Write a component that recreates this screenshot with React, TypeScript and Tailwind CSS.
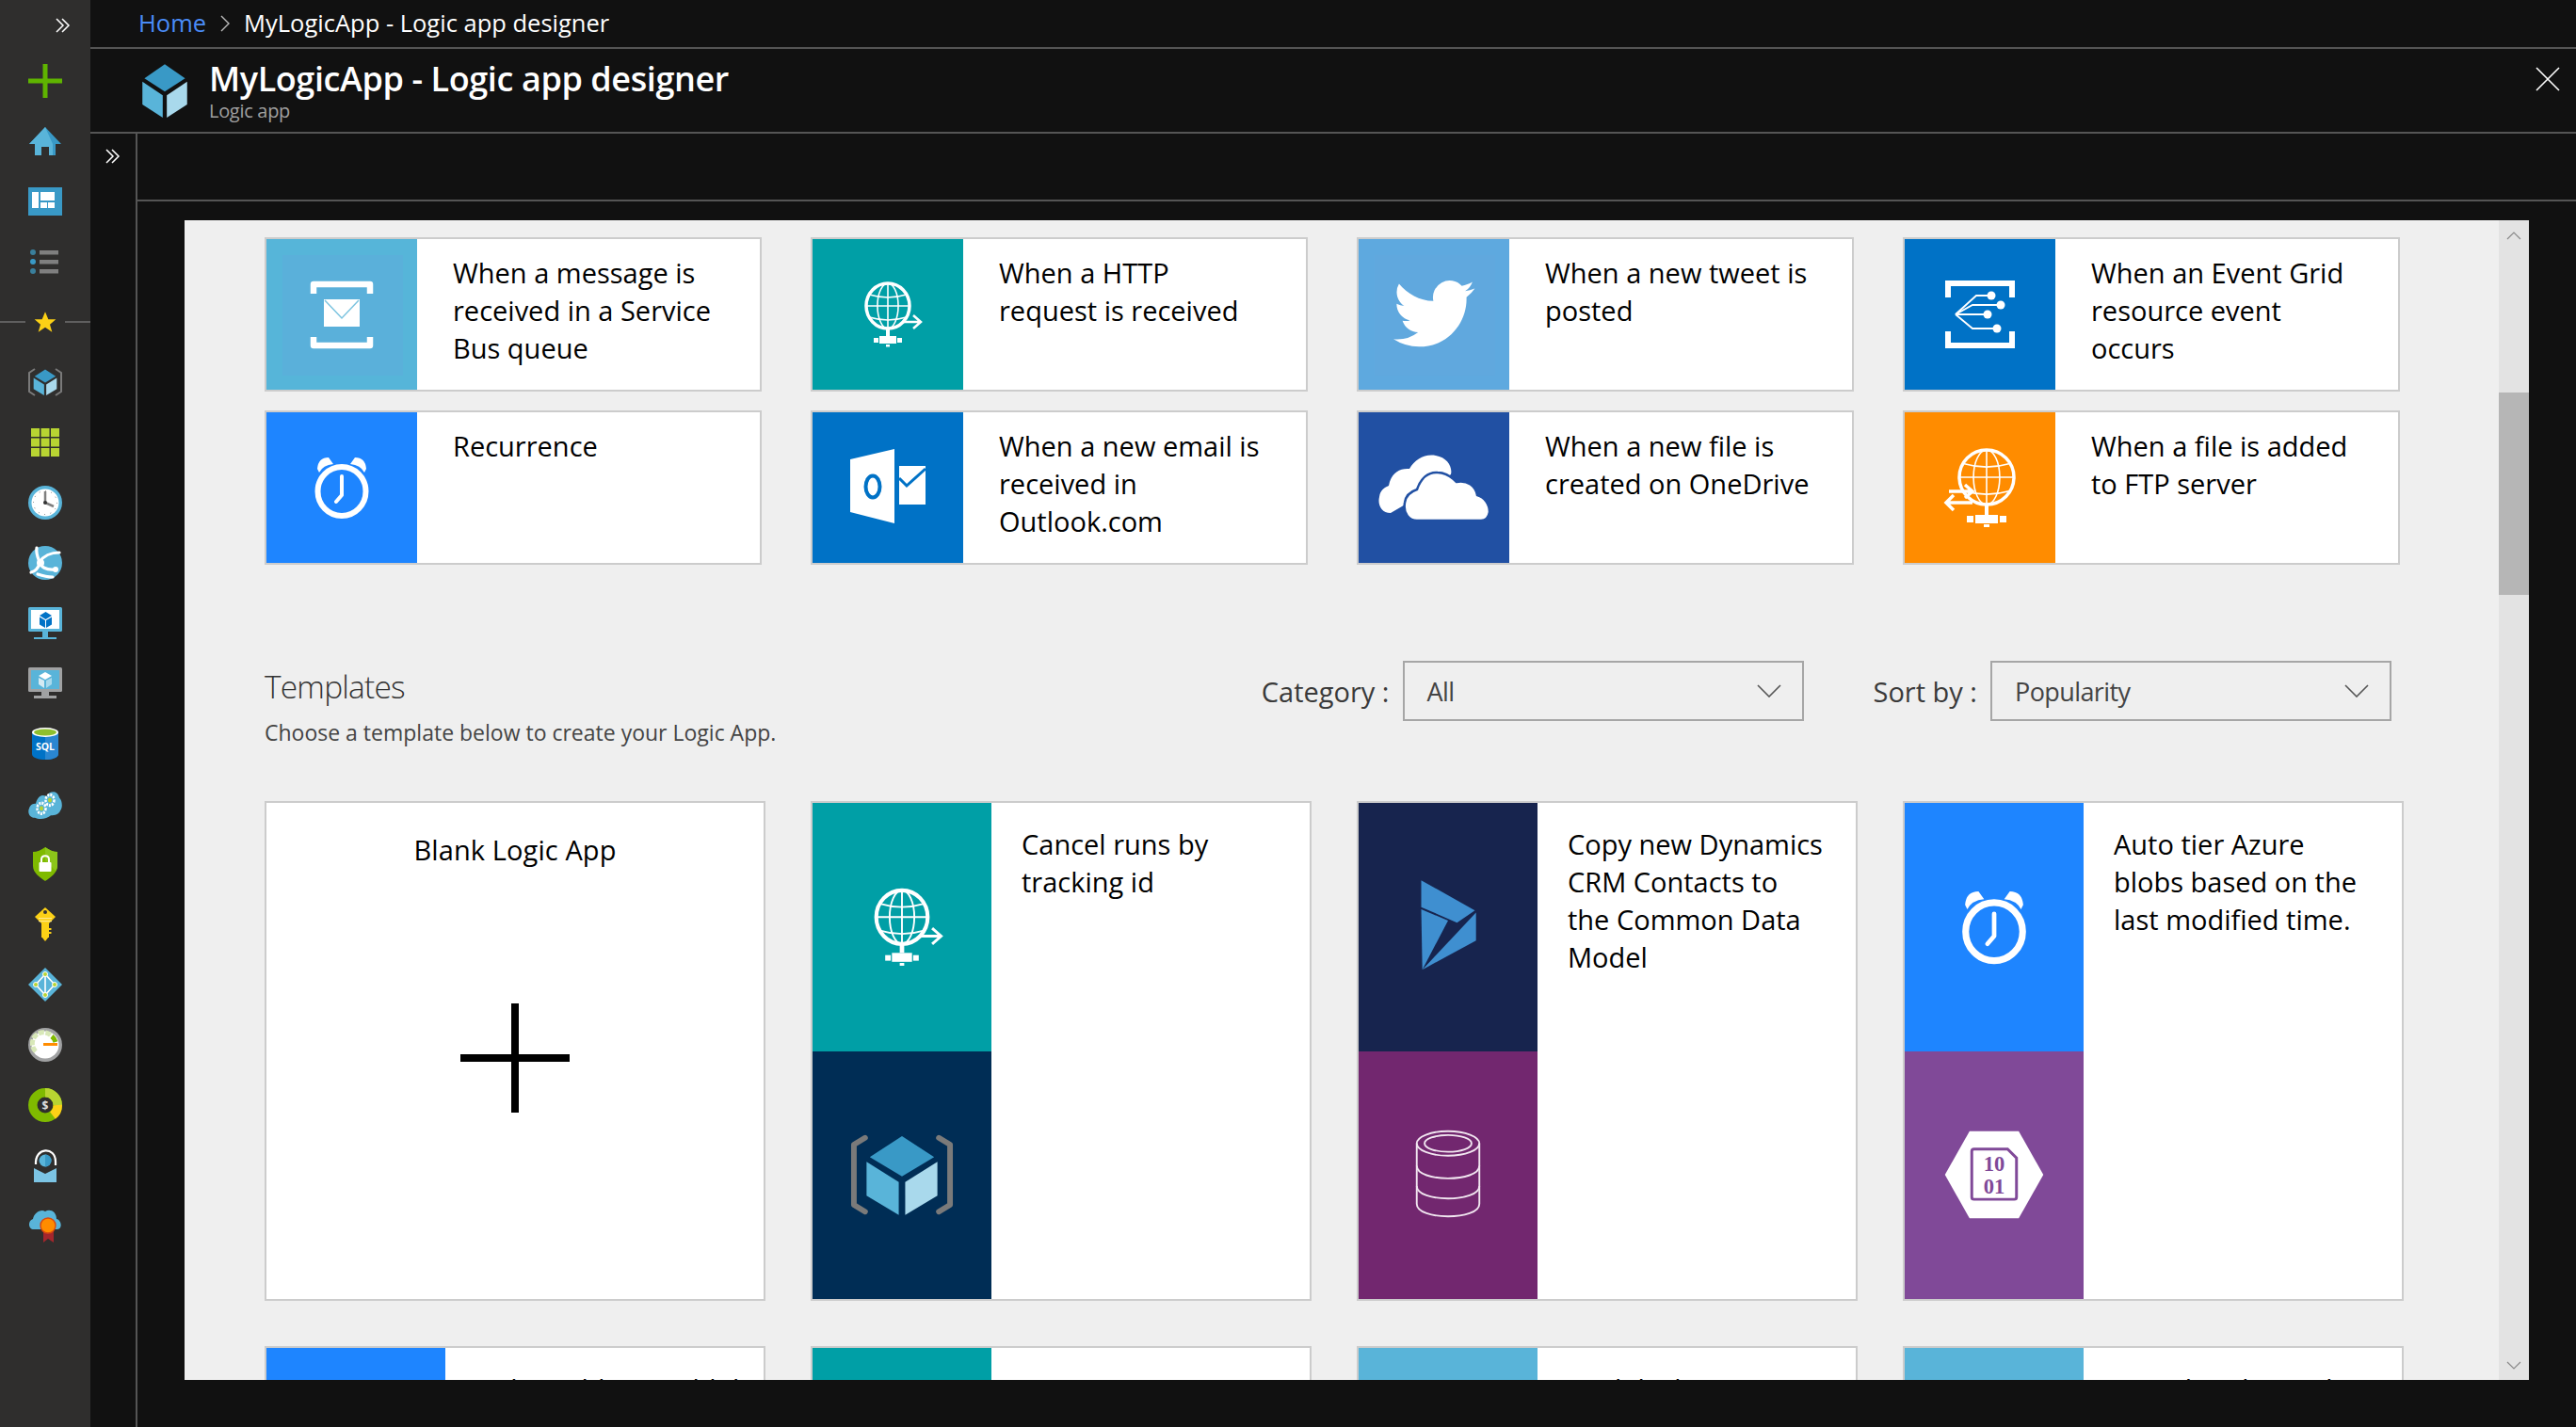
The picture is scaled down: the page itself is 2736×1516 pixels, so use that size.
import React from "react";

const font = { fontFamily: '"Open Sans", "Noto Sans", sans-serif' };

/* ---------- tile icons, drawn in a 160 box ---------- */
function Cube({ x, y, s }: { x: number; y: number; s: number }) {
  return (
    <g transform={`translate(${x} ${y}) scale(${s})`}>
      <polygon points="50,2 90,28 50,52 10,28" fill="#3999c6" />
      <polygon points="6,34 46,59 46,100 6,76" fill="#59b4d9" />
      <polygon points="94,34 54,59 54,100 94,76" fill="#a9d9ec" />
    </g>
  );
}

function GlobeGlyph({ cx, cy, rx, ry }: { cx: number; cy: number; rx: number; ry: number }) {
  return (
    <g fill="none" stroke="#fff">
      <ellipse cx={cx} cy={cy} rx={rx} ry={ry} strokeWidth="3.5" />
      <ellipse cx={cx} cy={cy} rx={rx * 0.48} ry={ry} strokeWidth="1.6" />
      <line x1={cx} y1={cy - ry} x2={cx} y2={cy + ry} strokeWidth="1.6" />
      <path d={`M${cx - rx} ${cy} H${cx + rx}`} strokeWidth="1.6" />
      <path d={`M${cx - rx * 0.85} ${cy - ry * 0.5} Q${cx} ${cy - ry * 0.25} ${cx + rx * 0.85} ${cy - ry * 0.5}`} strokeWidth="1.6" />
      <path d={`M${cx - rx * 0.85} ${cy + ry * 0.5} Q${cx} ${cy + ry * 0.75} ${cx + rx * 0.85} ${cy + ry * 0.5}`} strokeWidth="1.6" />
    </g>
  );
}

const ServiceBusIcon = () => (
  <svg viewBox="0 0 160 160" className="w-full">
    <rect x="17" y="17" width="128" height="128" fill="#5ab0da" />
    <path d="M50 58 V48 H110 V58" fill="none" stroke="#fff" strokeWidth="6.5" strokeLinejoin="round" />
    <path d="M50 104 V113 H110 V104" fill="none" stroke="#fff" strokeWidth="6.5" strokeLinejoin="round" />
    <rect x="61" y="64" width="38" height="29" fill="#fff" />
    <path d="M62 65 L80 84 L98 65" fill="none" stroke="#7cc4e0" strokeWidth="1.5" />
  </svg>
);

const HttpIcon = () => (
  <svg viewBox="0 0 160 160" className="w-full">
    <GlobeGlyph cx={80} cy={71} rx={23} ry={24} />
    <path d="M80 95 V103" stroke="#fff" strokeWidth="4" />
    <rect x="71" y="103" width="18" height="8" fill="#fff" />
    <rect x="65" y="105" width="5" height="5" fill="#fff" />
    <rect x="90" y="105" width="5" height="5" fill="#fff" />
    <rect x="78" y="112" width="4" height="2.5" fill="#fff" />
    <path d="M95 88 H115 M107 81 L115 88 L107 95" fill="none" stroke="#fff" strokeWidth="2.5" />
  </svg>
);

const TwitterIcon = () => (
  <svg viewBox="0 0 160 160" className="w-full">
    <rect x="17" y="17" width="128" height="128" fill="#60a8de" />
    <g transform="translate(37 36) scale(3.6)">
      <path
        fill="#fff"
        d="M23.953 4.57a10 10 0 01-2.825.775 4.958 4.958 0 002.163-2.723c-.951.555-2.005.959-3.127 1.184a4.92 4.92 0 00-8.384 4.482C7.69 8.095 4.067 6.13 1.64 3.162a4.822 4.822 0 00-.666 2.475c0 1.71.87 3.213 2.188 4.096a4.904 4.904 0 01-2.228-.616v.06a4.923 4.923 0 003.946 4.827 4.996 4.996 0 01-2.212.085 4.936 4.936 0 004.604 3.417 9.867 9.867 0 01-6.102 2.105c-.39 0-.779-.023-1.17-.067a13.995 13.995 0 007.557 2.209c9.053 0 13.998-7.496 13.998-13.985 0-.21 0-.42-.015-.63A9.935 9.935 0 0024 4.59z"
      />
    </g>
  </svg>
);

const EventGridIcon = () => (
  <svg viewBox="0 0 160 160" className="w-full">
    <path d="M46 62 V47 H114 V62" fill="none" stroke="#fff" strokeWidth="6" />
    <path d="M46 98 V113 H114 V98" fill="none" stroke="#fff" strokeWidth="6" />
    <g fill="none" stroke="#fff" strokeWidth="1.8">
      <path d="M54 80 L76 60 H92" />
      <path d="M54 80 L72 70 H102" />
      <path d="M54 80 H88" />
      <path d="M54 80 L72 95 H98" />
    </g>
    <g fill="#fff">
      <circle cx="92" cy="60" r="4.5" />
      <circle cx="102" cy="70" r="4.5" />
      <circle cx="88" cy="80" r="4.5" />
      <circle cx="98" cy="95" r="4.5" />
    </g>
  </svg>
);

const AlarmIcon = () => (
  <svg viewBox="0 0 160 160" className="w-full">
    <ellipse cx="80" cy="84" rx="25.5" ry="26" fill="none" stroke="#fff" strokeWidth="6" />
    <path d="M54 60 Q55 48 66 48 L71 55 Q60 56 56 64 Z" fill="#fff" />
    <path d="M106 60 Q105 48 94 48 L89 55 Q100 56 104 64 Z" fill="#fff" />
    <path d="M80 68 V88 L74 95" fill="none" stroke="#fff" strokeWidth="4" strokeLinecap="round" strokeLinejoin="round" />
  </svg>
);

const OutlookIcon = () => (
  <svg viewBox="0 0 160 160" className="w-full">
    <polygon points="40,50 87,39 87,118 40,106" fill="#fff" />
    <ellipse cx="64" cy="79" rx="7.5" ry="11.5" fill="none" stroke="#0072c6" strokeWidth="4" />
    <path d="M92 57 H120 V98 H92 Z" fill="#fff" />
    <path d="M92 70 L100 78 L120 60" fill="none" stroke="#0072c6" strokeWidth="3" />
  </svg>
);

const OneDriveIcon = () => (
  <svg viewBox="0 0 160 160" className="w-full">
    <path d="M34 107 C24 107 20 98 22 90 C23 82 28 80 32 78 C34 66 42 59 54 60 C60 50 70 44 82 46 C94 48 100 58 98 66 L46 100 Z" fill="#fff" />
    <path d="M62 115 C54 115 47 108 49 96 C50 88 56 84 62 82 C66 70 74 63 84 64 C92 64 98 68 104 74 C116 72 124 78 126 88 C134 90 139 98 139 106 C138 112 134 115 130 115 Z" fill="#fff" stroke="#2150a3" strokeWidth="2.5" />
  </svg>
);

const FtpIcon = () => (
  <svg viewBox="0 0 160 160" className="w-full">
    <GlobeGlyph cx={87} cy={69} rx={29} ry={29} />
    <path d="M87 98 V109" stroke="#fff" strokeWidth="4" />
    <rect x="75" y="109" width="24" height="9" fill="#fff" />
    <rect x="66" y="110" width="7" height="7" fill="#fff" />
    <rect x="101" y="110" width="7" height="7" fill="#fff" />
    <rect x="84" y="119" width="6" height="3" fill="#fff" />
    <path d="M47 84 H72 M64 77 L72 84 L64 91" fill="none" stroke="#fff" strokeWidth="3.5" />
    <path d="M72 96 H44 M52 88 L44 96 L52 104" fill="none" stroke="#fff" strokeWidth="3.5" />
  </svg>
);

const LogicAppIcon = () => (
  <svg viewBox="0 0 160 160" className="w-full">
    <path d="M47 47 L37 53 V107 L47 113" fill="none" stroke="#7a7a7a" strokeWidth="5" strokeLinecap="round" strokeLinejoin="round" />
    <path d="M113 47 L123 53 V107 L113 113" fill="none" stroke="#7a7a7a" strokeWidth="5" strokeLinecap="round" strokeLinejoin="round" />
    <Cube x={44} y={44} s={0.72} />
  </svg>
);

const DynamicsIcon = () => (
  <svg viewBox="0 0 160 160" className="w-full">
    <polygon points="56,38 104,65 88,76 56,62" fill="#3f8fd0" />
    <polygon points="56,64 80,74 57,118" fill="#3f8fd0" />
    <polygon points="105,67 105,92 57,118" fill="#3f8fd0" />
  </svg>
);

const DbIcon = () => (
  <svg viewBox="0 0 160 160" className="w-full">
    <g fill="none" stroke="#f1e6f0" strokeWidth="1.6">
      <ellipse cx="80" cy="52" rx="28" ry="11" />
      <ellipse cx="80" cy="52" rx="21" ry="7.5" />
      <path d="M52 52 V106 C52 121 108 121 108 106 V52" />
      <path d="M52 72 C52 87 108 87 108 72" />
      <path d="M52 90 C52 105 108 105 108 90" />
    </g>
  </svg>
);

const BlobIcon = () => (
  <svg viewBox="0 0 160 160" className="w-full">
    <polygon points="36,80 58,41 102,41 124,80 102,119 58,119" fill="#fff" />
    <path d="M60 59 Q60 57 62 57 H92 L100 65 V100 Q100 102 98 102 H62 Q60 102 60 100 Z" fill="none" stroke="#804998" strokeWidth="2.5" />
    <text x="80" y="77" textAnchor="middle" fontSize="19" fontWeight="700" fill="#804998" fontFamily="Liberation Serif, serif">10</text>
    <text x="80" y="97" textAnchor="middle" fontSize="19" fontWeight="700" fill="#804998" fontFamily="Liberation Serif, serif">01</text>
  </svg>
);

/* ---------- sidebar icons, drawn in a 36 box ---------- */
const sideIcons: React.ReactNode[] = [
  // create
  <g key="p" fill="#5fb400">
    <rect x="15.5" y="0" width="5" height="36" />
    <rect x="0" y="15.5" width="36" height="5" />
  </g>,
  // home
  <g key="h">
    <path d="M18 3 L35 21 H29 V33 H22 V24 H14 V33 H7 V21 H1 Z" fill="#3999c6" />
    <path d="M18 3 L26 21 V33 H22 V24 H14 V33 H7 V21 H1 Z" fill="#59b4d9" />
  </g>,
  // dashboard
  <g key="d">
    <rect x="0" y="3" width="36" height="30" fill="#3999c6" />
    <rect x="4" y="8" width="7" height="17" fill="#fff" />
    <rect x="13" y="8" width="15" height="9" fill="#fff" />
    <rect x="13" y="19" width="7" height="6" fill="#fff" />
    <rect x="21" y="19" width="7" height="6" fill="#fff" />
  </g>,
  // list
  <g key="l">
    <circle cx="5" cy="8" r="3" fill="#3a7f9c" />
    <circle cx="5" cy="18" r="3" fill="#3999c6" />
    <circle cx="5" cy="28" r="3" fill="#3a7f9c" />
    <rect x="12" y="6" width="20" height="4.5" fill="#7f7f7f" />
    <rect x="12" y="16" width="20" height="4.5" fill="#7f7f7f" />
    <rect x="12" y="26" width="20" height="4.5" fill="#7f7f7f" />
  </g>,
  // star (drawn separately)
  <polygon key="s" points="18,2 23,14 35,14 25.5,22 29,34 18,26.5 7,34 10.5,22 1,14 13,14" fill="#fcd116" />,
  // logic app
  <g key="la">
    <path d="M7 4 L1 8 V28 L7 32" fill="none" stroke="#7a7a7a" strokeWidth="2" />
    <path d="M29 4 L35 8 V28 L29 32" fill="none" stroke="#7a7a7a" strokeWidth="2" />
    <Cube x={4} y={4} s={0.28} />
  </g>,
  // all resources
  <g key="g" fill="#b8d432">
    {[3, 13.5, 24].map((x) => [3, 13.5, 24].map((y) => <rect key={`${x}-${y}`} x={x} y={y} width="9" height="9" />))}
  </g>,
  // clock
  <g key="c">
    <circle cx="18" cy="18" r="18" fill="#59b4d9" />
    <circle cx="18" cy="18" r="14.5" fill="#fff" />
    <circle cx="18" cy="18" r="12.5" fill="none" stroke="#777" strokeWidth="1" strokeDasharray="1 5.5" />
    <path d="M18 6 V19" stroke="#7f7f7f" strokeWidth="2.5" />
    <path d="M18 18 L27 22" stroke="#7f7f7f" strokeWidth="2.5" />
    <circle cx="18" cy="18" r="2" fill="#333" />
  </g>,
  // app services globe
  <g key="w">
    <circle cx="18" cy="18" r="18" fill="#59b4d9" />
    <g fill="none" stroke="#fff" strokeWidth="3.2" strokeLinecap="round">
      <path d="M9 2 C8 8 10 12 12 17" />
      <path d="M12 17 C16 11 24 7 33 7" />
      <path d="M12 17 C13 22 19 26 28 25" />
      <path d="M12 19 C10 25 7 27 3 28" />
      <path d="M10 30 C16 32 22 33 26 33" />
    </g>
    <circle cx="13" cy="18" r="4" fill="#fff" />
    <circle cx="29" cy="25" r="3" fill="#fff" />
  </g>,
  // vm monitor
  <g key="m">
    <rect x="0" y="1" width="36" height="26" rx="1.5" fill="#59b4d9" />
    <rect x="3" y="4" width="30" height="20" fill="#fff" />
    <rect x="15" y="27" width="6" height="6" fill="#59b4d9" />
    <rect x="6" y="33" width="24" height="2" fill="#59b4d9" />
    <polygon points="18.5,6 25,10 18.5,14 12,10" fill="#0072c6" />
    <polygon points="12,11.5 18,15 18,23 12,19.5" fill="#0072c6" />
    <polygon points="25,11.5 19,15 19,23 25,19.5" fill="#0072c6" />
  </g>,
  // classic vm monitor
  <g key="m2">
    <rect x="0" y="1" width="36" height="26" rx="1.5" fill="#a0a1a2" />
    <rect x="3" y="4" width="30" height="20" fill="#59b4d9" />
    <rect x="14" y="27" width="8" height="4" fill="#a0a1a2" />
    <rect x="6" y="31" width="24" height="3" fill="#a0a1a2" />
    <polygon points="18,6 25,10 18,14 11,10" fill="#fff" />
    <polygon points="11,12 17,15 17,23 11,19" fill="#d5eaf3" />
    <polygon points="25,12 19,15 19,23 25,19" fill="#a9d9ec" />
  </g>,
  // sql
  <g key="q">
    <path d="M4 6 V29 C4 37 32 37 32 29 V6 Z" fill="#0072c6" />
    <path d="M18 6 H32 V29 C32 33 25 35 18 35 Z" fill="#2a86d1" />
    <ellipse cx="18" cy="6" rx="14" ry="5" fill="#fff" />
    <ellipse cx="18" cy="6" rx="12" ry="3.4" fill="#8ebf2e" />
    <text x="18" y="25" textAnchor="middle" fontSize="10.5" fontWeight="700" fill="#fff" fontFamily="Open Sans, sans-serif">SQL</text>
  </g>,
  // cloud gears
  <g key="cg" transform="translate(0 -1) scale(1 1.25)">
    <path d="M7 27 C1 27 -1 22 1 19 C2 16 5 15 8 15 C10 8 16 7 19 9 C22 4 31 3 33 10 C36 12 37 18 34 21 C33 24 28 25 24 25 C20 28 12 29 7 27 Z" fill="#59b4d9" />
    <circle cx="14" cy="19" r="4.5" fill="none" stroke="#fff" strokeWidth="2.5" strokeDasharray="2 1" />
    <circle cx="14" cy="19" r="2" fill="#b8d432" />
    <circle cx="23" cy="12" r="4.5" fill="none" stroke="#fff" strokeWidth="2.5" strokeDasharray="2 1" />
    <circle cx="23" cy="12" r="2" fill="#b8d432" />
  </g>,
  // security center
  <g key="sh">
    <path d="M18 0 C22 3 27 5 31 5 V20 C31 27 24 32 18 36 C12 32 5 27 5 20 V5 C9 5 14 3 18 0 Z" fill="#7fba00" />
    <path d="M18 0 C22 3 27 5 31 5 V20 C31 22 30 24 29 25 L18 14 Z" fill="#8cc51a" />
    <rect x="11.5" y="16" width="13" height="10" rx="1" fill="#fff" />
    <path d="M14 16 V13 C14 8 22 8 22 13 V16" fill="none" stroke="#fff" strokeWidth="2" />
  </g>,
  // key
  <g key="k">
    <path d="M18 0 L29 10 L22 17 H14 L7 10 Z" fill="#fcd116" />
    <rect x="14" y="16" width="8" height="16" fill="#fcd116" />
    <path d="M18 36 L14 31 H22 Z" fill="#fcd116" />
    <rect x="22" y="22" width="2.5" height="2" fill="#fcd116" />
    <rect x="22" y="26" width="2.5" height="2" fill="#fcd116" />
    <circle cx="18" cy="5" r="2" fill="#333" />
    <rect x="11" y="11" width="14" height="1.2" fill="#ffe88a" />
    <rect x="11" y="14" width="14" height="1.2" fill="#ffe88a" />
  </g>,
  // azure ad
  <g key="ad">
    <polygon points="18,0 36,18 18,36 0,18" fill="#59b4d9" />
    <path d="M18 7 L8 18 L18 29 L28 18 Z M18 7 V29" fill="none" stroke="#fff" strokeWidth="1.6" />
    <circle cx="18" cy="7" r="2.5" fill="#b8d432" stroke="#fff" />
    <circle cx="8" cy="18" r="2.5" fill="#b8d432" stroke="#fff" />
    <circle cx="28" cy="18" r="2.5" fill="#b8d432" stroke="#fff" />
    <circle cx="18" cy="29" r="2.5" fill="#b8d432" stroke="#fff" />
  </g>,
  // monitor gauge
  <g key="gg">
    <circle cx="18" cy="18" r="18" fill="#a0a1a2" />
    <circle cx="18" cy="18" r="14.5" fill="#fff" />
    <path d="M8 25 A11.5 11.5 0 0 1 24 8" fill="none" stroke="#d8e8b8" strokeWidth="5" strokeDasharray="6 1.5" />
    <path d="M25 9 A11.5 11.5 0 0 1 29 15" fill="none" stroke="#7fba00" strokeWidth="5" />
    <rect x="16" y="16" width="15" height="3" fill="#ff8c00" />
  </g>,
  // cost donut
  <g key="cm">
    <circle cx="18" cy="18" r="13.2" fill="none" stroke="#7fba00" strokeWidth="9.5" />
    <path d="M18 4.8 A13.2 13.2 0 0 1 31.2 18" fill="none" stroke="#b8d432" strokeWidth="9.5" />
    <path d="M31.2 18 A13.2 13.2 0 0 1 26 29" fill="none" stroke="#fcd116" strokeWidth="9.5" />
    <text x="18" y="23" textAnchor="middle" fontSize="12" fontWeight="700" fill="#ddd" fontFamily="Open Sans, sans-serif">$</text>
  </g>,
  // help + support
  <g key="hs">
    <path d="M8 17 C7 -2 29 -2 29 14 V18" fill="none" stroke="#fff" strokeWidth="2.2" />
    <circle cx="18" cy="13" r="6.5" fill="#59b4d9" />
    <path d="M18 6.5 A6.5 6.5 0 0 1 18 19.5 Z" fill="#3999c6" />
    <path d="M6 21 L18 27 L30 21 V36 H6 Z" fill="#7cc4e4" />
  </g>,
  // cloud ribbon
  <g key="cr">
    <path d="M6 22 C0 22 -1 13 5 11 C6 5 13 0 18 3 C23 0 30 3 30 11 C35 12 37 21 31 22 Z" fill="#59b4d9" />
    <path d="M16 24 V36 L21 32 L27 36 V24 Z" fill="#a4262c" />
    <circle cx="21" cy="18" r="8" fill="#ff8c00" stroke="#d9480f" strokeWidth="1.4" />
  </g>,
];

const SideIcon = ({ children, small }: { children: React.ReactNode; small?: boolean }) => (
  <svg viewBox="0 0 36 36" className={small ? "w-[24px] h-[24px]" : "w-[36px] h-[36px]"}>
    {children}
  </svg>
);

function Sidebar() {
  return (
    <aside className="w-24 shrink-0 bg-[#2f2e2d] flex flex-col">
      <div className="h-[54px] flex items-center justify-end pr-[20px]">
        <DoubleChevron />
      </div>
      {sideIcons.map((icon, i) => (
        <div key={i} className="h-16 flex items-center shrink-0">
          {i === 4 ? (
            <div className="w-full flex items-center gap-[9px]">
              <div className="h-[2px] flex-1 bg-[#5f5f5f]" />
              <SideIcon small>{icon}</SideIcon>
              <div className="h-[2px] flex-1 bg-[#5f5f5f]" />
            </div>
          ) : (
            <div className="w-full flex justify-center">
              <SideIcon>{icon}</SideIcon>
            </div>
          )}
        </div>
      ))}
    </aside>
  );
}

function DoubleChevron() {
  return (
    <svg width="18" height="18" viewBox="0 0 18 18" fill="none" stroke="#fff" strokeWidth="1.5">
      <path d="M2 2 L9 9 L2 16" />
      <path d="M8 2 L15 9 L8 16" />
    </svg>
  );
}

/* ---------- cards ---------- */
type Trigger = { color: string; icon: React.ReactNode; lines: string[] };

const triggers: Trigger[] = [
  { color: "bg-[#56b5d9]", icon: <ServiceBusIcon />, lines: ["When a message is", "received in a Service", "Bus queue"] },
  { color: "bg-[#009fa6]", icon: <HttpIcon />, lines: ["When a HTTP", "request is received"] },
  { color: "bg-[#5ea9df]", icon: <TwitterIcon />, lines: ["When a new tweet is", "posted"] },
  { color: "bg-[#0072c6]", icon: <EventGridIcon />, lines: ["When an Event Grid", "resource event", "occurs"] },
  { color: "bg-[#1e85ff]", icon: <AlarmIcon />, lines: ["Recurrence"] },
  { color: "bg-[#0072c6]", icon: <OutlookIcon />, lines: ["When a new email is", "received in", "Outlook.com"] },
  { color: "bg-[#2150a3]", icon: <OneDriveIcon />, lines: ["When a new file is", "created on OneDrive"] },
  { color: "bg-[#ff8c00]", icon: <FtpIcon />, lines: ["When a file is added", "to FTP server"] },
];

type Template = { top: string; topIcon?: React.ReactNode; bottom?: string; bottomIcon?: React.ReactNode; lines: string[] };

const templates: Template[] = [
  { top: "bg-[#009fa6]", topIcon: <HttpIcon />, bottom: "bg-[#002d55]", bottomIcon: <LogicAppIcon />, lines: ["Cancel runs by", "tracking id"] },
  { top: "bg-[#17244e]", topIcon: <DynamicsIcon />, bottom: "bg-[#72276f]", bottomIcon: <DbIcon />, lines: ["Copy new Dynamics", "CRM Contacts to", "the Common Data", "Model"] },
  { top: "bg-[#1e85ff]", topIcon: <AlarmIcon />, bottom: "bg-[#804998]", bottomIcon: <BlobIcon />, lines: ["Auto tier Azure", "blobs based on the", "last modified time."] },
  { top: "bg-[#1e85ff]", lines: ["Delete old Azure blobs"] },
  { top: "bg-[#009fa6]", lines: ["Process queue"] },
  { top: "bg-[#59b4d9]", lines: ["Peek-lock receive"] },
  { top: "bg-[#59b4d9]", lines: ["Correlated in-order"] },
];

const Lines = ({ lines }: { lines: string[] }) => (
  <div className="text-[29px] leading-[40px] text-black whitespace-nowrap">
    {lines.map((l) => (
      <div key={l}>{l}</div>
    ))}
  </div>
);

function TriggerCard({ t }: { t: Trigger }) {
  return (
    <div className="h-[164px] bg-white border-2 border-[#cccccc] flex">
      <div className={`w-[160px] shrink-0 flex items-center ${t.color}`}>{t.icon}</div>
      <div className="pl-[38px] pt-[16px]">
        <Lines lines={t.lines} />
      </div>
    </div>
  );
}

function TemplateCard({ t }: { t: Template }) {
  return (
    <div className="h-[531px] bg-white border-2 border-[#cccccc] flex">
      <div className="w-[190px] shrink-0 flex flex-col">
        <div className={`flex-1 flex items-center ${t.top}`}>{t.topIcon}</div>
        {t.bottom && <div className={`flex-1 flex items-center ${t.bottom}`}>{t.bottomIcon}</div>}
      </div>
      <div className="pl-[32px] pt-[24px]">
        <Lines lines={t.lines} />
      </div>
    </div>
  );
}

function BlankCard() {
  return (
    <div className="h-[531px] bg-white border-2 border-[#cccccc] flex flex-col items-center">
      <div className="pt-[30px] text-[29px] leading-[40px] text-black tracking-[0.1px]">Blank Logic App</div>
      <svg viewBox="0 0 116 116" className="w-[116px] h-[116px] mt-[143px]">
        <rect x="0" y="54" width="116" height="8" fill="#000" />
        <rect x="54" y="0" width="8" height="116" fill="#000" />
      </svg>
    </div>
  );
}

function Select({ label, value }: { label: string; value: string }) {
  return (
    <div className="flex items-center gap-[14px]">
      <span className="text-[29px] text-[#3a3a3a] pt-[2px]">{label}</span>
      <div className="w-[426px] h-[64px] border-2 border-[#a6a6a6] flex items-center justify-between pl-[24px] pr-[22px]">
        <span className="text-[27px] text-[#444] tracking-[-0.6px] pt-[2px]">{value}</span>
        <svg width="26" height="14" viewBox="0 0 26 14" fill="none" stroke="#555" strokeWidth="1.6">
          <path d="M1 1 L13 13 L25 1" />
        </svg>
      </div>
    </div>
  );
}

export default function App() {
  return (
    <div className="flex w-full h-[1516px] overflow-hidden bg-[#111111]" style={font}>
      <Sidebar />
      <main className="flex-1 min-w-0 flex flex-col">
        <div className="h-[52px] shrink-0 border-b-2 border-[#555] flex items-center pl-[51px] text-[25.5px] pb-[1px]">
          <span className="text-[#4a8cf7]">Home</span>
          <svg width="12" height="20" viewBox="0 0 12 20" fill="none" stroke="#bbb" strokeWidth="1.4" className="mx-[14px]">
            <path d="M2 2 L10 10 L2 18" />
          </svg>
          <span className="text-white">MyLogicApp - Logic app designer</span>
        </div>
        <div className="h-[90px] shrink-0 border-b-2 border-[#555] flex items-center pl-[52px] pr-[17px]">
          <svg viewBox="0 0 100 100" className="w-[54px] h-[58px]" preserveAspectRatio="none">
            <Cube x={0} y={0} s={1} />
          </svg>
          <div className="ml-[20px] flex-1">
            <div className="text-[36px] leading-[44px] font-semibold text-white tracking-[-0.4px]">MyLogicApp - Logic app designer</div>
            <div className="text-[20px] leading-[24px] text-[#a0a0a0] tracking-[-0.3px]">Logic app</div>
          </div>
          <svg width="26" height="26" viewBox="0 0 26 26" stroke="#fff" strokeWidth="1.6" className="-mt-[24px]">
            <path d="M1 1 L25 25 M25 1 L1 25" />
          </svg>
        </div>
        <div className="flex-1 min-h-0 flex">
          <div className="w-[50px] shrink-0 border-r-2 border-[#555] flex justify-center pt-[15px]">
            <DoubleChevron />
          </div>
          <div className="flex-1 min-w-0 flex flex-col">
            <div className="h-[72px] shrink-0 border-b-2 border-[#555]" />
            <div className="flex-1 min-h-0 pl-[50px] pr-[50px] pt-[20px] pb-[50px] flex">
              <div className="flex-1 min-w-0 bg-[#efefef] overflow-hidden pl-[85px] pt-[18px]">
                <div className="grid grid-cols-[repeat(4,528px)] gap-x-[52px] gap-y-[20px]">
                  {triggers.map((t) => (
                    <TriggerCard key={t.lines[0]} t={t} />
                  ))}
                </div>
                <div className="mt-[102px] w-[2259px] flex justify-between">
                  <div>
                    <div className="text-[33.5px] leading-[54px] font-light text-[#333] tracking-[-0.8px]">Templates</div>
                    <div className="text-[23px] leading-[44px] text-[#444]">Choose a template below to create your Logic App.</div>
                  </div>
                  <div className="flex gap-[74px] items-start">
                    <Select label="Category :" value="All" />
                    <Select label="Sort by :" value="Popularity" />
                  </div>
                </div>
                <div className="mt-[51px] grid grid-cols-[repeat(4,532px)] gap-x-[48px] gap-y-[48px]">
                  <BlankCard />
                  {templates.map((t) => (
                    <TemplateCard key={t.lines[0]} t={t} />
                  ))}
                </div>
              </div>
              <div className="w-[32px] shrink-0 bg-[#e3e3e3] flex flex-col">
                <div className="h-[32px] shrink-0 flex items-center justify-center">
                  <svg width="16" height="9" viewBox="0 0 16 9" fill="none" stroke="#8a8a8a" strokeWidth="1.2">
                    <path d="M1 8 L8 1 L15 8" />
                  </svg>
                </div>
                <div className="h-[151px] shrink-0" />
                <div className="h-[215px] shrink-0 bg-[#b6b6b6]" />
                <div className="flex-1" />
                <div className="h-[32px] shrink-0 flex items-center justify-center">
                  <svg width="16" height="9" viewBox="0 0 16 9" fill="none" stroke="#8a8a8a" strokeWidth="1.2">
                    <path d="M1 1 L8 8 L15 1" />
                  </svg>
                </div>
              </div>
            </div>
          </div>
        </div>
      </main>
    </div>
  );
}
